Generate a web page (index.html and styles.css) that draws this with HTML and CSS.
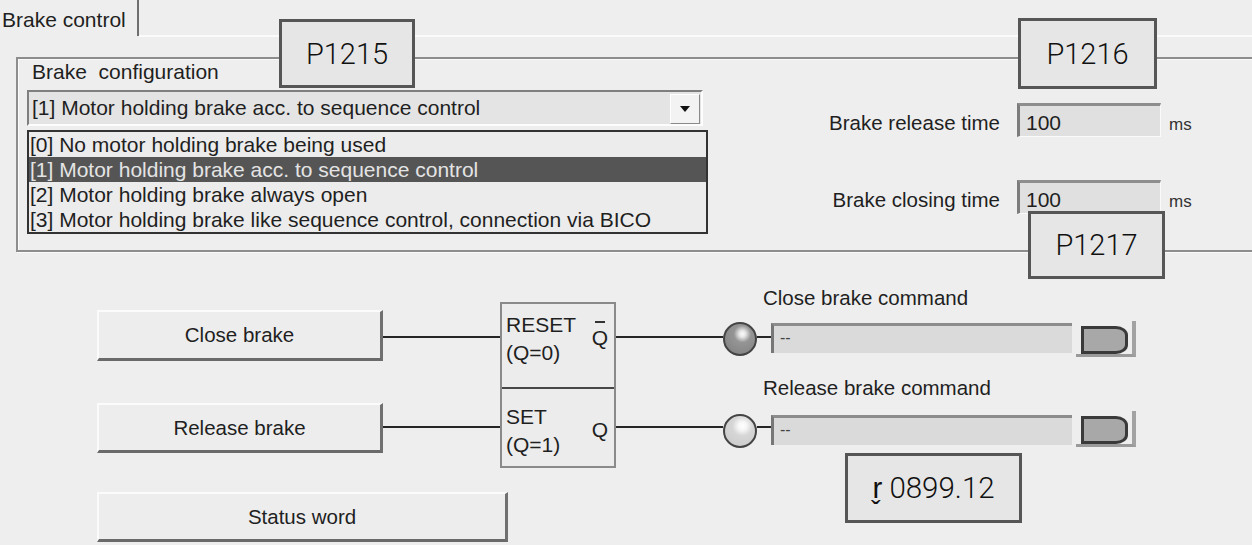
FILE: index.html
```html
<!DOCTYPE html>
<html lang="en">
<head>
<meta charset="utf-8">
<title>Brake control</title>
<link rel="stylesheet" href="styles.css">
</head>
<body>
<div class="page">
  <div class="tabs">
    <div class="tab">Brake control</div>
    <div class="tab-rest"></div>
  </div>

  <section class="group">
    <div class="group-left">
      <div class="group-title">Brake  configuration</div>
      <div class="combo">
        <span class="combo-text">[1] Motor holding brake acc. to sequence control</span>
        <span class="combo-btn"><span class="arrow"></span></span>
      </div>
      <ul class="list">
        <li>[0] No motor holding brake being used</li>
        <li class="sel">[1] Motor holding brake acc. to sequence control</li>
        <li>[2] Motor holding brake always open</li>
        <li>[3] Motor holding brake like sequence control, connection via BICO</li>
      </ul>
    </div>
    <div class="group-right">
      <div class="time-row t1">
        <span class="time-label">Brake release time</span>
        <div class="time-field">100</div>
        <span class="unit">ms</span>
      </div>
      <div class="time-row t2">
        <span class="time-label">Brake closing time</span>
        <div class="time-field">100</div>
        <span class="unit">ms</span>
      </div>
    </div>
  </section>

  <div class="diagram">
    <div class="col-buttons">
      <div class="btn btn-close">Close brake</div>
      <div class="btn btn-release">Release brake</div>
      <div class="btn btn-status">Status word</div>
    </div>
    <div class="col-wires col-in">
      <div class="wire wire-1"></div>
      <div class="wire wire-2"></div>
    </div>
    <div class="ff">
      <div class="ff-sec ff-top">
        <div class="ff-lines">RESET<br>(Q=0)</div>
        <div class="ff-q qbar">Q</div>
      </div>
      <div class="ff-sec ff-bot">
        <div class="ff-lines">SET<br>(Q=1)</div>
        <div class="ff-q">Q</div>
      </div>
    </div>
    <div class="col-wires col-out">
      <div class="wire wire-1"></div>
      <div class="wire wire-2"></div>
    </div>
    <div class="col-lamps">
      <div class="lamp lamp-dark"></div>
      <div class="lamp lamp-light"></div>
    </div>
    <div class="col-wires col-stub">
      <div class="wire wire-1"></div>
      <div class="wire wire-2"></div>
    </div>
    <div class="col-fields">
      <div class="cmd-label cl-1">Close brake command</div>
      <div class="cmd-field cf-1">--</div>
      <div class="cmd-label cl-2">Release brake command</div>
      <div class="cmd-field cf-2">--</div>
      <div class="pbox readout">r&#x032C; 0899.12</div>
    </div>
    <div class="col-ledbtn">
      <div class="ledbtn lb-1"><div class="led"></div></div>
      <div class="ledbtn lb-2"><div class="led"></div></div>
    </div>
  </div>

  <div class="pbox overlay p1215">P1215</div>
  <div class="pbox overlay p1216">P1216</div>
  <div class="pbox overlay p1217">P1217</div>
</div>
</body>
</html>
```

FILE: styles.css
```css
* { box-sizing: border-box; }
html, body { margin: 0; padding: 0; }
body {
  background: #eeeeee;
  font-family: "Liberation Sans", Arial, "DejaVu Sans", sans-serif;
  font-size: 21px;
  color: #1f1f1f;
}
.page {
  position: relative;
  width: 1252px;
  height: 545px;
  overflow: hidden;
}

/* tab strip */
.tabs { display: flex; height: 37px; }
.tab {
  width: 139px;
  height: 36px;
  padding: 8px 0 0 2px;
  line-height: 24px;
  border-right: 2px solid #6f6f6f;
  white-space: nowrap;
}
.tab-rest { flex: 1; border-bottom: 2px solid #fbfbfb; }

/* group box */
.group {
  margin: 20px 0 0 16px;
  width: 1260px;
  height: 195px;
  border: 2px solid #8d8d8d;
  box-shadow: inset 1px 1px 0 #fafafa, 1px 1px 0 #fafafa;
  padding-left: 9px;
  display: flex;
  align-items: flex-start;
}
.group-left { width: 681px; display: flex; flex-direction: column; }
.group-title {
  margin: 1px 0 0 5px;
  line-height: 24px;
  white-space: pre;
}
.combo {
  margin-top: 6px;
  width: 676px;
  height: 36px;
  display: flex;
  border: 2px solid;
  border-color: #7f7f7f #fdfdfd #fdfdfd #7f7f7f;
  background: #e4e4e4;
}
.combo-text { flex: 1; padding-left: 3px; line-height: 32px; white-space: nowrap; }
.combo-btn {
  width: 30px;
  height: 30px;
  margin: 2px 1px 0 0;
  background: #f3f3f3;
  border: 1px solid;
  border-color: #ffffff #8a8a8a #8a8a8a #ffffff;
  display: flex;
  align-items: center;
  justify-content: center;
}
.arrow {
  width: 0;
  height: 0;
  border-left: 5px solid transparent;
  border-right: 5px solid transparent;
  border-top: 6px solid #111;
}
.list {
  list-style: none;
  margin: 4px 0 0;
  padding: 0;
  width: 681px;
  height: 104px;
  border: 2px solid #333;
  background: #ececec;
}
.list li { height: 25px; line-height: 25px; padding-left: 1px; white-space: nowrap; }
.list li.sel { background: #555; color: #e4e4e4; }

.group-right { display: flex; flex-direction: column; }
.time-row { display: flex; align-items: baseline; }
.t1 { margin-top: 44px; }
.t2 { margin-top: 43px; }
.time-label {
  width: 292px;
  text-align: right;
  line-height: 24px;
  font-size: 20.5px;
  white-space: nowrap;
}
.time-field {
  margin-left: 17px;
  width: 144px;
  height: 34px;
  padding: 4px 0 0 6px;
  line-height: 26px;
  background: #e0e0e0;
  border-style: solid;
  border-width: 3px 1px 1px 3px;
  border-color: #8e8e8e #fafafa #fafafa #7c7c7c;
}
.unit { margin-left: 8px; font-size: 17px; color: #333; }

/* diagram */
.diagram {
  display: flex;
  align-items: flex-start;
  margin-top: 32px;
  padding-left: 97px;
  font-size: 20.5px;
}
.col-buttons { width: 286px; display: flex; flex-direction: column; }
.btn {
  height: 50px;
  display: flex;
  align-items: center;
  justify-content: center;
  background: #ededed;
  border-style: solid;
  border-width: 2px 3px 3px 2px;
  border-color: #fbfbfb #707070 #6a6a6a #fbfbfb;
  white-space: nowrap;
}
.btn-close { margin-top: 26px; height: 51px; }
.btn-release { margin-top: 42px; }
.btn-status { margin-top: 39px; width: 411px; }

.col-wires { display: flex; flex-direction: column; }
.col-in { width: 117px; }
.col-out { width: 107px; }
.col-stub { width: 14px; }
.wire { height: 2px; background: #262626; }
.wire-1 { margin-top: 52px; }
.wire-2 { margin-top: 88px; }

.ff {
  width: 116px;
  height: 166px;
  margin-top: 18px;
  border: 2px solid #8a8a8a;
  background: #ececec;
  display: flex;
  flex-direction: column;
  font-size: 21px;
}
.ff-sec { display: flex; justify-content: space-between; align-items: flex-start; padding: 0 6px 0 4px; }
.ff-top { height: 85px; border-bottom: 2px solid #474747; padding-top: 7px; }
.ff-bot { flex: 1; padding-top: 14px; }
.ff-lines { line-height: 28px; white-space: nowrap; }
.ff-q { line-height: 17px; }
.ff-top .ff-q { margin-top: 10px; }
.ff-bot .ff-q { margin-top: 18px; }
.qbar::before {
  content: "";
  display: block;
  width: 10px;
  height: 2px;
  margin: 0 auto 6px;
  background: #333;
}

.col-lamps { width: 34px; display: flex; flex-direction: column; }
.lamp {
  width: 34px;
  height: 34px;
  border-radius: 50%;
  border: 2px solid #444;
}
.lamp-dark {
  margin-top: 38px;
  background: radial-gradient(circle at 58% 33%, #fafafa 0, #e6e6e6 12%, #959595 32%, #7e7e7e 100%);
}
.lamp-light {
  margin-top: 58px;
  background: radial-gradient(circle at 58% 33%, #ffffff 0, #f6f6f6 16%, #d6d6d6 38%, #c8c8c8 100%);
}

.col-fields { width: 301px; display: flex; flex-direction: column; }
.cmd-label { margin-left: -8px; line-height: 24px; white-space: nowrap; }
.cl-1 { margin-top: 2px; }
.cl-2 { margin-top: 23px; }
.cmd-field {
  height: 30px;
  padding-left: 6px;
  line-height: 24px;
  font-size: 16px;
  color: #444;
  background: #dadada;
  border-style: solid;
  border-width: 3px 0 0 3px;
  border-color: #8c8c8c #dadada #dadada #777777;
}
.cf-1 { margin-top: 13px; }
.cf-2 { margin-top: 15px; }

.col-ledbtn { margin-left: 4px; width: 60px; display: flex; flex-direction: column; }
.ledbtn {
  height: 36px;
  padding: 5px 0 0 5px;
  border-style: solid;
  border-width: 0 4px 3px 0;
  border-color: #eeeeee #a2a2a2 #9a9a9a #eeeeee;
}
.lb-1 { margin-top: 37px; }
.lb-2 { margin-top: 54px; }
.led {
  width: 47px;
  height: 28px;
  border: 3px solid #3a3a3a;
  border-radius: 0 12px 12px 0 / 0 9px 9px 0;
  background: #a8a8a8;
}

/* parameter callouts */
.pbox {
  display: flex;
  align-items: center;
  justify-content: center;
  border: 3px solid #565656;
  background: #e6e6e6;
  font-family: Roboto, "Liberation Sans", Arial, sans-serif;
  font-weight: 300;
  font-size: 29px;
  color: #111;
  white-space: nowrap;
}
.readout { margin: 8px 0 0 74px; width: 177px; height: 70px; font-size: 29.5px; }
.overlay { position: absolute; }
.p1215 { left: 279px; top: 19px; width: 136px; height: 69px; }
.p1216 { left: 1018px; top: 18px; width: 139px; height: 71px; }
.p1217 { left: 1028px; top: 211px; width: 137px; height: 68px; }
```
